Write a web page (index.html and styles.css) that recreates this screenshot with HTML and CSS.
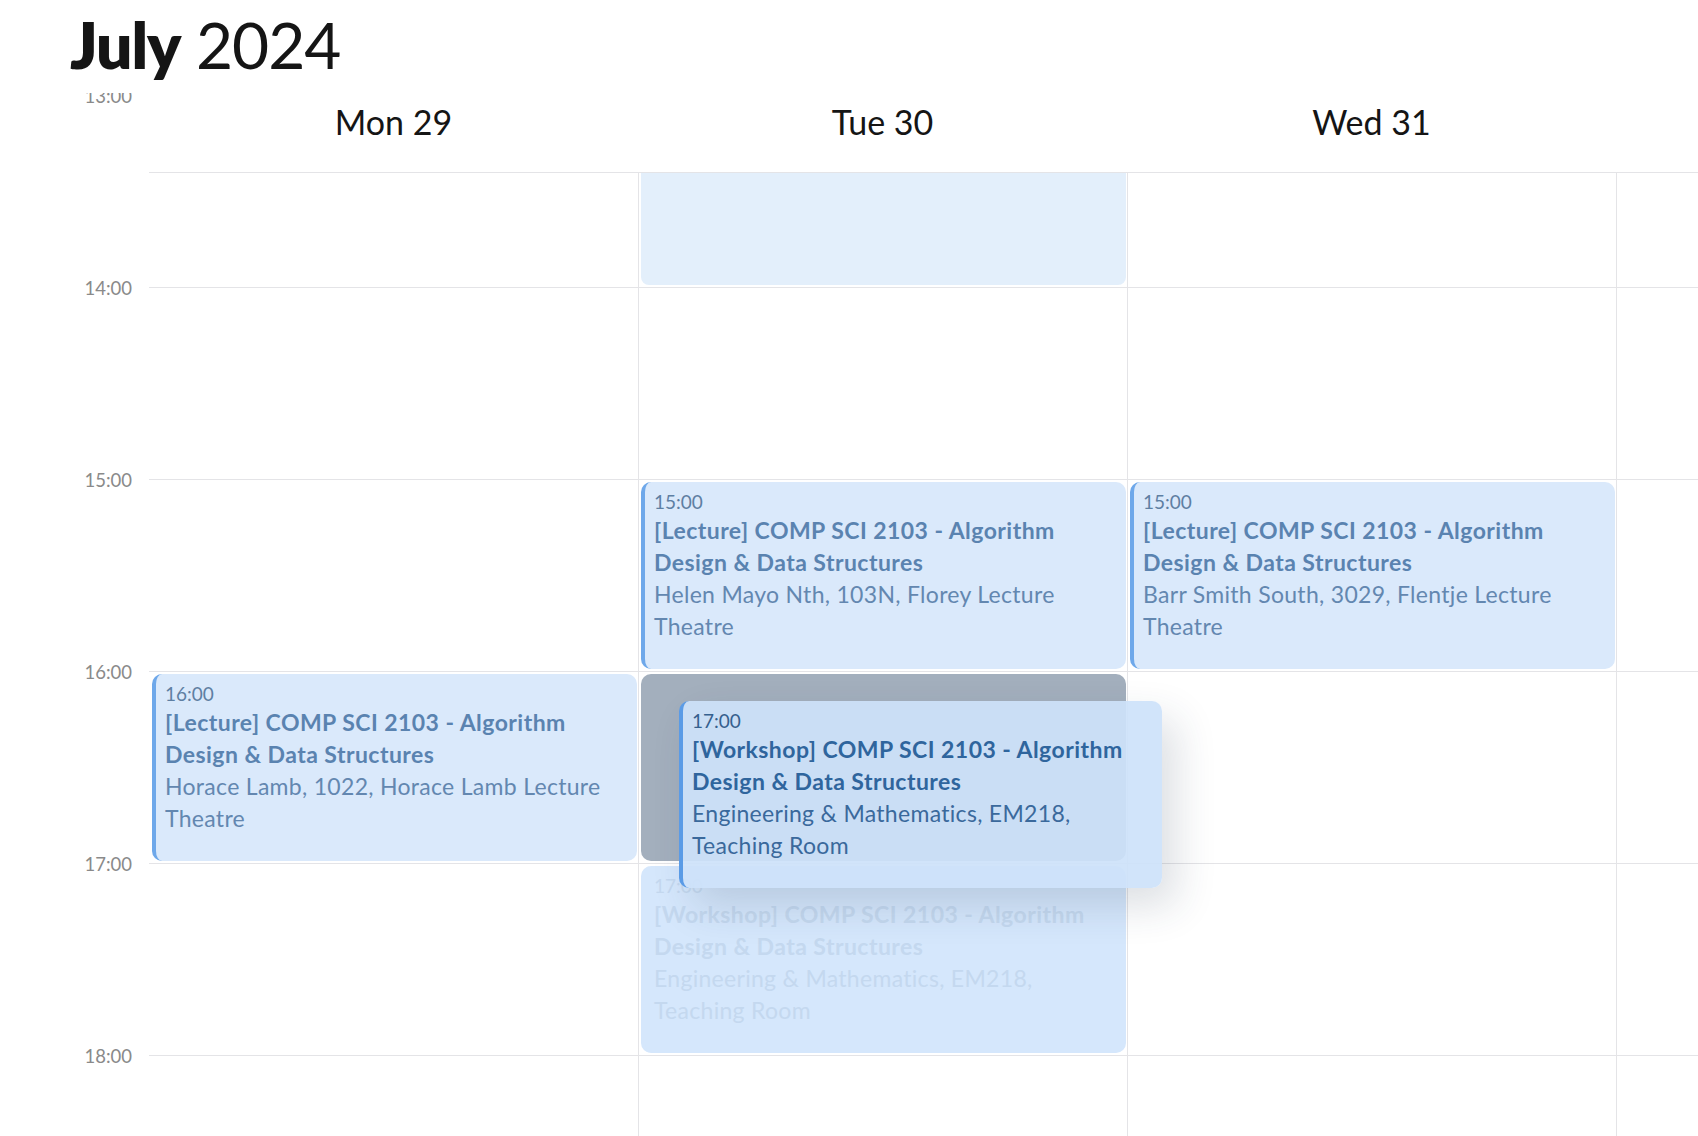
FILE: index.html
```html
<!DOCTYPE html>
<html lang="en">
<head>
<meta charset="utf-8">
<title>July 2024</title>
<link rel="stylesheet" href="styles.css">
</head>
<body>
<div class="page">
  <header class="month">
    <h1 class="month-title"><span class="month-name">July</span> 2024</h1>
  </header>

  <section class="calendar">
    <div class="day-heads">
      <div class="day-head">Mon 29</div>
      <div class="day-head">Tue 30</div>
      <div class="day-head">Wed 31</div>
      <div class="day-head"></div>
    </div>

    <div class="grid">
      <div class="gutter">
        <div class="hour"><span class="hour-label">13:00</span></div>
        <div class="hour"><span class="hour-label">14:00</span></div>
        <div class="hour"><span class="hour-label">15:00</span></div>
        <div class="hour"><span class="hour-label">16:00</span></div>
        <div class="hour"><span class="hour-label">17:00</span></div>
        <div class="hour"><span class="hour-label">18:00</span></div>
      </div>

      <div class="day">
        <div class="slot"></div><div class="slot"></div><div class="slot"></div>
        <div class="slot"></div><div class="slot"></div><div class="slot"></div>
        <div class="event" style="top:579px">
          <div class="ev-time">16:00</div>
          <div class="ev-title">[Lecture] COMP SCI 2103 - Algorithm<br>Design &amp; Data Structures</div>
          <div class="ev-place">Horace Lamb, 1022, Horace Lamb Lecture<br>Theatre</div>
        </div>
      </div>

      <div class="day">
        <div class="slot"></div><div class="slot"></div><div class="slot"></div>
        <div class="slot"></div><div class="slot"></div><div class="slot"></div>
        <div class="event event-busy" style="top:3px"></div>
        <div class="event" style="top:387px">
          <div class="ev-time">15:00</div>
          <div class="ev-title">[Lecture] COMP SCI 2103 - Algorithm<br>Design &amp; Data Structures</div>
          <div class="ev-place">Helen Mayo Nth, 103N, Florey Lecture<br>Theatre</div>
        </div>
        <div class="drop-target" style="top:579px"></div>
        <div class="event event-ghost" style="top:771px">
          <div class="ev-time">17:00</div>
          <div class="ev-title">[Workshop] COMP SCI 2103 - Algorithm<br>Design &amp; Data Structures</div>
          <div class="ev-place">Engineering &amp; Mathematics, EM218,<br>Teaching Room</div>
        </div>
        <div class="event event-drag" style="top:606px">
          <div class="ev-time">17:00</div>
          <div class="ev-title">[Workshop] COMP SCI 2103 - Algorithm<br>Design &amp; Data Structures</div>
          <div class="ev-place">Engineering &amp; Mathematics, EM218,<br>Teaching Room</div>
        </div>
      </div>

      <div class="day">
        <div class="slot"></div><div class="slot"></div><div class="slot"></div>
        <div class="slot"></div><div class="slot"></div><div class="slot"></div>
        <div class="event" style="top:387px">
          <div class="ev-time">15:00</div>
          <div class="ev-title">[Lecture] COMP SCI 2103 - Algorithm<br>Design &amp; Data Structures</div>
          <div class="ev-place">Barr Smith South, 3029, Flentje Lecture<br>Theatre</div>
        </div>
      </div>

      <div class="day">
        <div class="slot"></div><div class="slot"></div><div class="slot"></div>
        <div class="slot"></div><div class="slot"></div><div class="slot"></div>
      </div>
    </div>
  </section>
</div>
</body>
</html>
```

FILE: styles.css
```css
* {
  box-sizing: border-box;
}

html, body {
  margin: 0;
  background: #ffffff;
}

body {
  font-family: "Lato", "Noto Sans", sans-serif;
  color: #151515;
  overflow: hidden;
}

.page {
  width: 1698px;
  height: 1136px;
  overflow: hidden;
}

.month {
  height: 93px;
  padding: 13px 0 0 70px;
  position: relative;
  z-index: 3;
  background: #ffffff;
}

.month-title {
  margin: 0;
  font-size: 64px;
  line-height: 64px;
  font-weight: 400;
  letter-spacing: -1px;
  color: #151515;
}

.month-name {
  font-weight: 800;
}

.calendar {
  height: 1043px;
  overflow: hidden;
}

.day-heads {
  position: relative;
  z-index: 2;
  display: flex;
  margin-left: 149px;
  height: 80px;
  padding-top: 8px;
  background: #ffffff;
  border-bottom: 1px solid #e4e4e7;
}

.day-head {
  flex: none;
  width: 489px;
  text-align: center;
  font-size: 34px;
  line-height: 42px;
  color: #151515;
}

.grid {
  display: flex;
  margin-top: -78px;
}

.gutter {
  flex: none;
  width: 149px;
}

.hour {
  height: 192px;
  position: relative;
}

.hour-label {
  position: absolute;
  right: 17px;
  top: -11px;
  font-size: 18.5px;
  line-height: 24px;
  color: #8a8a8a;
}

.day {
  flex: none;
  width: 489px;
  position: relative;
  border-left: 1px solid #e4e4e7;
}

.gutter + .day {
  border-left: none;
}

.slot {
  height: 192px;
  border-top: 1px solid #e4e4e7;
}

.event {
  position: absolute;
  left: 2px;
  right: 1px;
  height: 187px;
  padding: 8px 10px 8px 9px;
  background: #dae9fb;
  border-left: 4px solid #6ea8ea;
  border-radius: 10px;
  color: #5a82ae;
  overflow: hidden;
}

.gutter + .day .event {
  left: 3px;
}

.ev-time {
  font-size: 19px;
  line-height: 24px;
  color: #5e7fa3;
}

.ev-title {
  font-size: 23px;
  line-height: 32px;
  font-weight: 700;
  letter-spacing: 0.45px;
  color: #5a83b0;
  white-space: nowrap;
}

.ev-place {
  font-size: 23px;
  line-height: 32px;
  letter-spacing: 0.3px;
  color: #6387b0;
  white-space: nowrap;
}

.event-busy {
  background: #e3effb;
  border-left: none;
  border-radius: 8px;
}

.drop-target {
  position: absolute;
  left: 2px;
  right: 1px;
  height: 187px;
  background: #a3afbd;
  border-radius: 10px;
}

.event-ghost {
  background: #d5e7fc;
  border-left-color: #d5e7fc;
}

.event-ghost .ev-time,
.event-ghost .ev-title,
.event-ghost .ev-place {
  color: #c4d8ef;
}

.event-drag {
  left: 40px;
  right: auto;
  width: 483px;
  z-index: 10;
  background: rgba(205, 226, 250, 0.92);
  border-left-color: #5a9be6;
  box-shadow: 14px 18px 40px rgba(40, 55, 80, 0.16);
}

.event-drag .ev-time {
  color: #35608e;
}

.event-drag .ev-title {
  color: #2f659d;
}

.event-drag .ev-place {
  color: #3a699c;
}
```
